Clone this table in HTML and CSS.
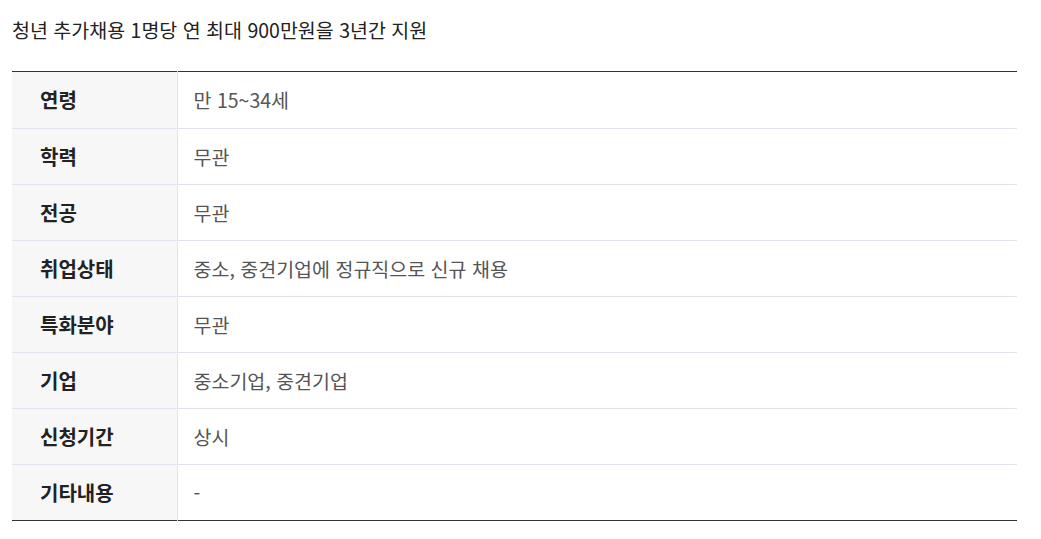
FILE: index.html
```html
<!DOCTYPE html>
<html lang="ko">
<head>
<meta charset="utf-8">
<link rel="stylesheet" href="styles.css">
</head>
<body>
<div class="wrap">
  <h3 class="title">청년 추가채용 1명당 연 최대 900만원을 3년간 지원</h3>
  <table class="info">
    <tbody>
      <tr><th>연령</th><td>만 15~34세</td></tr>
      <tr><th>학력</th><td>무관</td></tr>
      <tr><th>전공</th><td>무관</td></tr>
      <tr><th>취업상태</th><td>중소, 중견기업에 정규직으로 신규 채용</td></tr>
      <tr><th>특화분야</th><td>무관</td></tr>
      <tr><th>기업</th><td>중소기업, 중견기업</td></tr>
      <tr><th>신청기간</th><td>상시</td></tr>
      <tr><th>기타내용</th><td>-</td></tr>
    </tbody>
  </table>
</div>
</body>
</html>
```

FILE: styles.css
```css
html, body {
  margin: 0;
  padding: 0;
  background: #fff;
}
body {
  font-family: "Noto Sans CJK KR", "Noto Sans", sans-serif;
  color: #333;
}
.wrap {
  padding: 0 24px 0 12px;
}
.title {
  margin: 0;
  padding-top: 17px;
  height: 54px;
  box-sizing: border-box;
  font-size: 19.5px;
  font-weight: 400;
  line-height: 26px;
  color: #222;
}
.info {
  width: 100%;
  border-collapse: collapse;
  border-top: 1px solid #333;
  border-bottom: 1px solid #333;
  margin-top: 17px;
}
.info th, .info td {
  height: 55px;
  padding: 0;
  border-bottom: 1px solid #dfe4ec;
  font-size: 19.5px;
  line-height: 26px;
  text-align: left;
  vertical-align: middle;
}
.info tr:first-child th, .info tr:first-child td {
  height: 56px;
}
.info tr:last-child th, .info tr:last-child td {
  border-bottom: 0;
}
.info th {
  width: 165px;
  padding-left: 28px;
  box-sizing: border-box;
  background: #f7f7f7;
  border-right: 1px solid #dfe4ec;
  font-size: 20px;
  font-weight: 700;
  color: #222;
}
.info td {
  padding-left: 16px;
  color: #555;
}
```
